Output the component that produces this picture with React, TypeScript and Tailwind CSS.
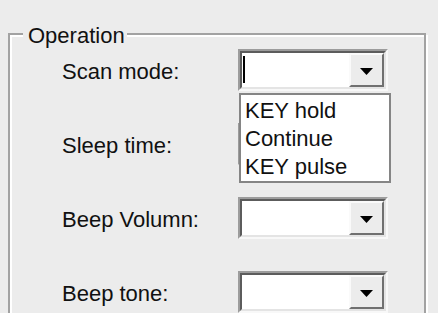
import React from "react";

function Combo({ cursor = false }: { cursor?: boolean }) {
  return (
    <div className="w-[150px] h-[42px] flex border-2 border-t-[#9c9c9c] border-l-[#9c9c9c] border-r-[#f8f8f8] border-b-[#f8f8f8]">
      <div className="flex-1 flex border-2 border-t-[#5c5c5c] border-l-[#5c5c5c] border-r-[#e4e4e4] border-b-[#e4e4e4] bg-white">
        <div className="flex-1">
          {cursor && <div className="ml-[1px] mt-[3px] w-[2px] h-[27px] bg-black" />}
        </div>
        <div className="w-[35px] flex items-center justify-center bg-[#ececec] border-2 border-t-[#fafafa] border-l-[#fafafa] border-r-[#707070] border-b-[#707070]">
          <svg width="13" height="7" viewBox="0 0 13 7" className="mt-[3px]">
            <polygon points="0,0 13,0 6.5,7" fill="#000" />
          </svg>
        </div>
      </div>
    </div>
  );
}

function Row({ label, cursor = false }: { label: string; cursor?: boolean }) {
  return (
    <div className="flex pl-[52px]">
      <div className="w-[176px] mt-[10px]">{label}</div>
      <Combo cursor={cursor} />
    </div>
  );
}

export default function App() {
  return (
    <div className="w-[438px] h-[313px] bg-[#ececec] overflow-hidden font-['Liberation_Sans',Arial,sans-serif] text-[22px] leading-[25px] text-[#111]">
      <div className="ml-[8px] mt-[33px] w-[418px] h-[300px] relative border-2 border-[#a2a2a2] shadow-[inset_2px_2px_0_#fff,2px_2px_0_#fff]">
        <div className="absolute left-[13px] top-[-12px] bg-[#ececec] pl-[5px] pr-[2px]">Operation</div>
        <div className="flex flex-col gap-[32px] pt-[14px]">
          <Row label="Scan mode:" cursor />
          <Row label="Sleep time:" />
          <Row label="Beep Volumn:" />
          <Row label="Beep tone:" />
        </div>
        <div className="absolute left-[229px] top-[58px] w-[152px] h-[90px] bg-white border-2 border-[#858585] pl-[4px] pt-[2px] leading-[28px]">
          <div>KEY hold</div>
          <div>Continue</div>
          <div>KEY pulse</div>
        </div>
      </div>
    </div>
  );
}
